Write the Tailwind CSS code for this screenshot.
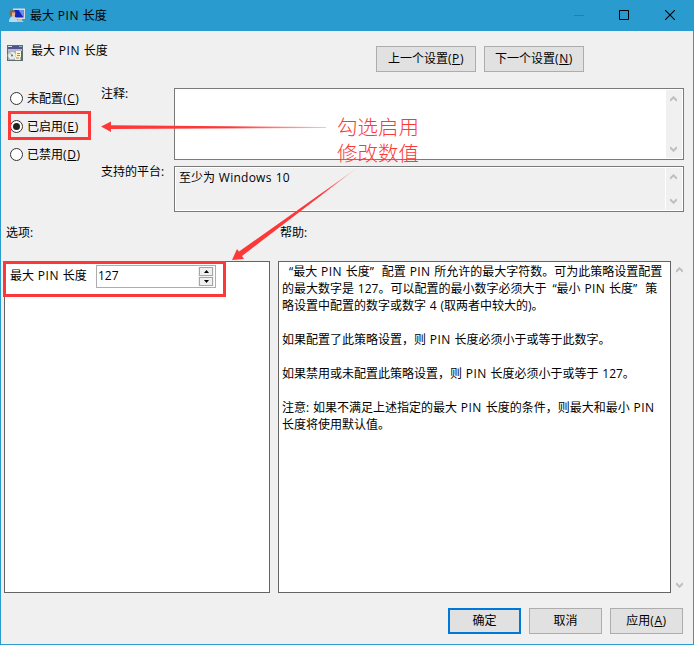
<!DOCTYPE html>
<html lang="zh-CN">
<head>
<meta charset="utf-8">
<title>最大 PIN 长度</title>
<script src="https://cdn.jsdelivr.net/npm/@tailwindcss/browser@4"></script>
</head>
<body class="w-[694px] h-[645px] overflow-hidden font-['Open_Sans','Noto_Sans_CJK_SC',sans-serif] text-[12px] leading-[17px] text-black [word-spacing:0.7px]">
<div class="relative w-[694px] h-[645px] bg-[#f0f0f0] border border-[#2a9bce] flex flex-col">
  <header class="h-[30px] shrink-0 bg-[#2a9bce] flex items-center pl-2">
    <svg class="w-4 h-4 shrink-0" viewBox="0 0 16 16">
      <path d="M4 .5h12v10.500H5z" fill="#d9dcd5"/><path d="M5 2h9.500v7.500H6z" fill="#1524b8"/><path d="M9.500 2h5v7.500z" fill="#6f8df0"/><path d="M9 11h4v1.500l2 1.500H7z" fill="#c8c5b8"/>
      <circle cx="3.500" cy="5" r="3" fill="#8a6548"/><path d="M3 4.500h3v4.500H3z" fill="#e0b48c"/><path d="M0 14c0-4 2-5.500 4-5.500s4.500 1.500 4.500 5.500z" fill="#b7d9f2"/>
    </svg>
    <span class="ml-[5px] -mt-px grow">最大 <span class="tracking-[0.5px]">PIN</span> 长度</span>
    <div class="flex items-center mr-[18px] -mt-[2px]">
      <svg class="w-[10px] h-[10px]" viewBox="0 0 10 10" shape-rendering="crispEdges"><path d="M0 5h10v1H0z" fill="#2281ac"/></svg>
      <svg class="w-[10px] h-[10px] ml-[35px]" viewBox="0 0 10 10"><path d="M.5.5h9v9h-9z" fill="none" stroke="#000"/></svg>
      <svg class="w-[10px] h-[10px] ml-[36px]" viewBox="0 0 10 10"><path d="M0 0l10 10M10 0L0 10" stroke="#000" stroke-width="1.1"/></svg>
    </div>
  </header>

  <section class="h-[57px] shrink-0 flex">
    <svg class="w-4 h-4 mt-[14px] ml-[6px] shrink-0" viewBox="0 0 16 16">
      <path d="M0 0h16v16H0z" fill="#56716f"/><path d="M1 1h14v3H1z" fill="#53548f"/><path d="M1 1h4v1H1z" fill="#d8e8e8"/><path d="M12 1h3v1h-3z" fill="#7fc0c0"/><path d="M1 4h14v2H1z" fill="#b9b7c9"/><path d="M1 6h13v9H1z" fill="#a9b5b0"/>
      <circle cx="5" cy="10.500" r="4.200" fill="#ececec" stroke="#8a9a8e" stroke-width=".6"/><path d="M5 10.500l-3-2 2-2z" fill="#a9d9b9"/><circle cx="5" cy="10.500" r="1" fill="#666"/><path d="M9 6h5v6h-1v3H8v-3h1z" fill="#fff3cf"/><path d="M10 8.500h3M10 10.500h3M9 13h3" stroke="#a58e55"/>
    </svg>
    <span class="ml-2 mt-[11px] w-[345px] shrink-0">最大 <span class="tracking-[0.5px]">PIN</span> 长度</span>
    <div class="flex gap-2 mt-[15px]">
      <button class="w-[100px] h-[26px] bg-[#e1e1e1] border border-[#adadad] text-center pb-px">上一个设置<span class="tracking-[0.6px]">(<u class="underline-offset-1">P</u>)</span></button>
      <button class="w-[100px] h-[26px] bg-[#e1e1e1] border border-[#adadad] text-center pb-px">下一个设置<span class="tracking-[0.6px]">(<u class="underline-offset-1">N</u>)</span></button>
    </div>
  </section>

  <section class="h-[124px] shrink-0 flex">
    <div class="w-[100px] shrink-0 flex flex-col gap-[11px] pl-[9px] pt-[2px]">
      <label class="flex items-center"><i class="w-[13px] h-[13px] rounded-full border border-[#333] bg-white mr-1"></i><span>未配置<span class="tracking-[0.6px]">(<u class="underline-offset-1">C</u>)</span></span></label>
      <label class="flex items-center"><i class="w-[13px] h-[13px] rounded-full border border-[#333] bg-white mr-1 flex items-center justify-center"><b class="w-[7px] h-[7px] rounded-full bg-[#222]"></b></i><span>已启用<span class="tracking-[0.7px]">(<u class="underline-offset-1">E</u>)</span></span></label>
      <label class="flex items-center"><i class="w-[13px] h-[13px] rounded-full border border-[#333] bg-white mr-1"></i><span>已禁用<span class="tracking-[0.6px]">(<u class="underline-offset-1">D</u>)</span></span></label>
    </div>
    <div class="w-[73px] shrink-0 whitespace-nowrap">
      <div class="h-[75px] -mt-[3px]">注释:</div>
      <div class="mt-[3px]">支持的平台:</div>
    </div>
    <div class="flex flex-col gap-[6px]">
      <div class="w-[510px] h-[72px] border border-[#7a7a7a] bg-white flex justify-end p-px">
        <div class="w-4 bg-[#f0f0f0] flex flex-col justify-between items-center pl-0 pr-[2px] py-[6px]">
          <svg class="w-[7px] h-[6px]" viewBox="0 0 7 6"><path d="M0 4.7l3.5-3.4L7 4.7" fill="none" stroke="#bfbfbf" stroke-width="2"/></svg>
          <svg class="w-[7px] h-[6px]" viewBox="0 0 7 6"><path d="M0 1.3l3.5 3.4L7 1.3" fill="none" stroke="#bfbfbf" stroke-width="2"/></svg>
        </div>
      </div>
      <div class="w-[510px] h-[46px] border border-[#7a7a7a] bg-white flex p-px">
        <div class="grow bg-[#f0f0f0] pl-[3px] pt-[1px]">至少为 <span class="tracking-[0.25px]">Windows 10</span></div>
        <div class="w-4 ml-px bg-[#f0f0f0] flex flex-col justify-between items-center pr-[2px] py-[6px]">
          <svg class="w-[7px] h-[6px]" viewBox="0 0 7 6"><path d="M0 4.7l3.5-3.4L7 4.7" fill="none" stroke="#bfbfbf" stroke-width="2"/></svg>
          <svg class="w-[7px] h-[6px]" viewBox="0 0 7 6"><path d="M0 1.3l3.5 3.4L7 1.3" fill="none" stroke="#bfbfbf" stroke-width="2"/></svg>
        </div>
      </div>
    </div>
  </section>

  <div class="h-[49px] shrink-0 flex pl-[5px] pt-[12px]"><span class="w-[274px]">选项:</span><span>帮助:</span></div>

  <main class="h-[332px] shrink-0 flex pl-[3px]">
    <div class="w-[266px] border border-[#646464] bg-white flex items-start pl-[5px] pt-[3px]">
      <span class="w-[86px] pt-[2px] shrink-0">最大 <span class="tracking-[0.5px]">PIN</span> 长度</span>
      <div class="w-[120px] h-[23px] border border-[#abadb3] bg-white flex p-px">
        <span class="grow leading-[18px]">127</span>
        <div class="w-4 bg-[#f0f0f0] flex flex-col pl-px pr-px">
          <div class="h-[9px] border border-[#a5a5a5] bg-[#f0f0f0] flex justify-center items-center"><svg class="w-[5px] h-[3px]" viewBox="0 0 5 3"><path d="M0 3L2.5 0 5 3z"/></svg></div>
          <div class="h-[9px] mt-px border border-[#a5a5a5] bg-[#f0f0f0] flex justify-center items-center"><svg class="w-[5px] h-[3px]" viewBox="0 0 5 3"><path d="M0 0h5L2.5 3z"/></svg></div>
        </div>
      </div>
    </div>
    <div class="ml-2 w-[393px] border border-[#646464] bg-white pl-[3px] pt-[1px] whitespace-nowrap">
      <p class="pl-[7px]">“最大 <span class="tracking-[0.4px]">PIN</span> 长度<span class="mr-[8px]">”</span>配置 <span class="tracking-[0.4px]">PIN</span> 所允许的最大字符数。可为此策略设置配置</p>
      <p>的最大数字是 127。可以配置的最小数字必须大于<span class="ml-[6px]">“</span>最小 <span class="tracking-[0.4px]">PIN</span> 长度<span class="mr-[8px]">”</span>策</p>
      <p>略设置中配置的数字或数字 4 (取两者中较大的)。</p>
      <p class="mt-[17px]">如果配置了此策略设置，则 <span class="tracking-[0.4px]">PIN</span> 长度必须小于或等于此数字。</p>
      <p class="mt-[17px]">如果禁用或未配置此策略设置，则 <span class="tracking-[0.4px]">PIN</span> 长度必须小于或等于 127。</p>
      <p class="mt-[17px]">注意: 如果不满足上述指定的最大 <span class="tracking-[0.5px]">PIN</span> 长度的条件，则最大和最小 <span class="tracking-[0.5px]">PIN</span></p>
      <p>长度将使用默认值。</p>
    </div>
    <div class="w-[17px] flex flex-col justify-between items-center pt-[6px] pb-[5px]">
      <svg class="w-[7px] h-[6px]" viewBox="0 0 7 6"><path d="M0 4.7l3.5-3.4L7 4.7" fill="none" stroke="#bfbfbf" stroke-width="2"/></svg>
      <svg class="w-[7px] h-[6px]" viewBox="0 0 7 6"><path d="M0 1.3l3.5 3.4L7 1.3" fill="none" stroke="#bfbfbf" stroke-width="2"/></svg>
    </div>
  </main>

  <footer class="flex justify-end gap-2 pt-[15px] pr-[10px]">
    <button class="w-[73px] h-[26px] bg-[#e1e1e1] border-2 border-[#0078d7] pb-px">确定</button>
    <button class="w-[73px] h-[26px] bg-[#e1e1e1] border border-[#adadad] pb-px">取消</button>
    <button class="w-[73px] h-[26px] bg-[#e1e1e1] border border-[#adadad] pb-px">应用<span class="tracking-[0.6px]">(<u class="underline-offset-1">A</u>)</span></button>
  </footer>

  <!-- Annotation layer -->
  <svg class="absolute -left-px -top-px w-[694px] h-[645px] pointer-events-none" viewBox="0 0 694 645">
    <defs>
      <linearGradient id="a" gradientUnits="userSpaceOnUse" x1="230" y1="0" x2="328" y2="0"><stop stop-color="#fd3838"/><stop offset="1" stop-color="#fd3838" stop-opacity=".3"/></linearGradient>
      <linearGradient id="b" gradientUnits="userSpaceOnUse" x1="320" y1="193" x2="358" y2="167"><stop stop-color="#fd3838"/><stop offset="1" stop-color="#fd3838" stop-opacity=".2"/></linearGradient>
    </defs>
    <path d="M9.500 112.500h80v26h-80zM4.500 262.500h220v33h-220z" fill="none" stroke="#fd3838" stroke-width="3"/>
    <path d="M101 126.500l10-5v3.700L326 127v1l-215 1v3z" fill="url(#a)"/>
    <path d="M232 260l5-11 2 2.500L357 168l-115 88 2 3z" fill="url(#b)"/>
  </svg>
  <div class="absolute left-[336px] top-[112px] text-[20.5px] text-[#fd3838] font-light font-['Noto_Sans_CJK_SC',sans-serif]">
    <div class="h-[26px] leading-[26px]">勾选启用</div>
    <div class="h-[26px] leading-[26px]">修改数值</div>
  </div>
</div>
</body>
</html>
